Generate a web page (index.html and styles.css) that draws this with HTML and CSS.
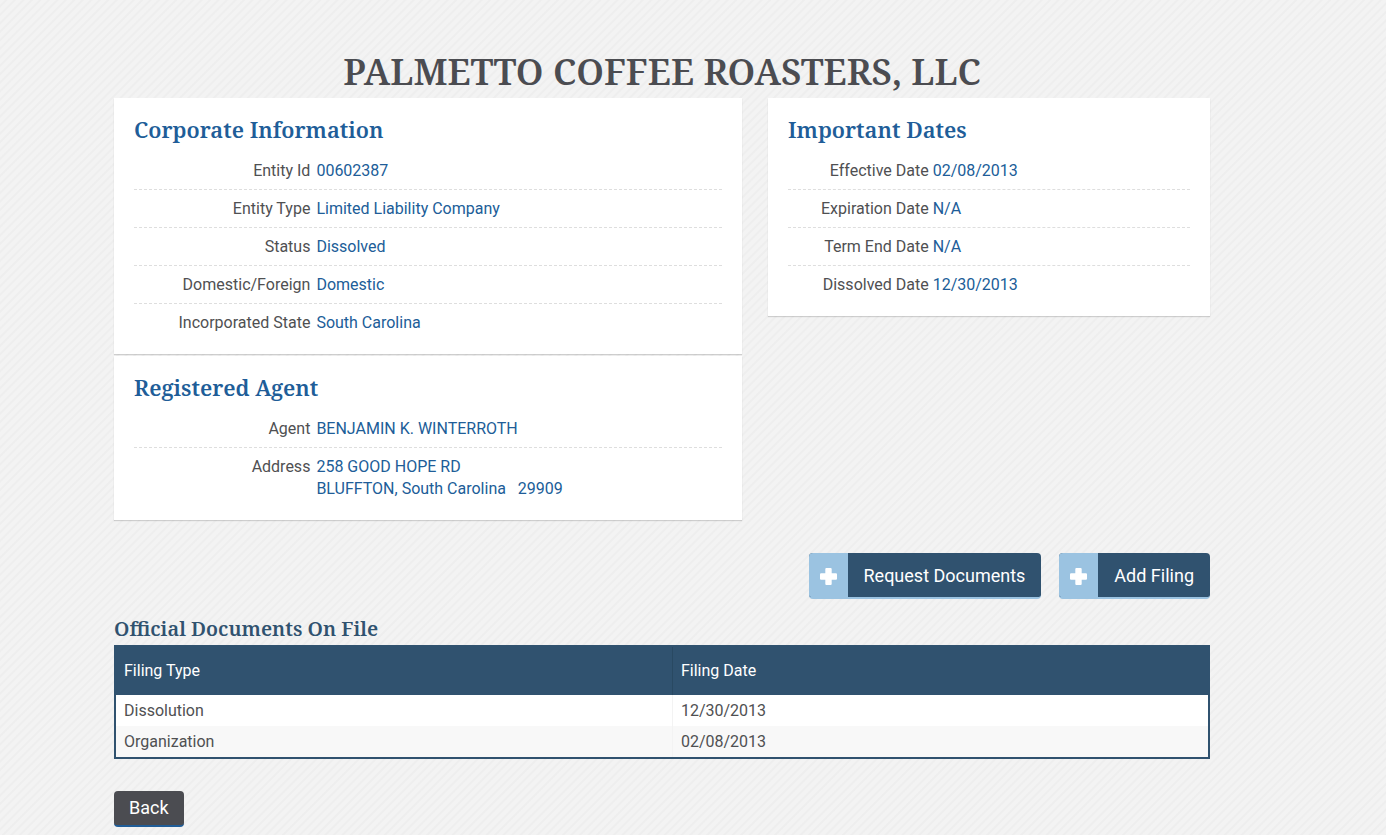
FILE: index.html
```html
<!DOCTYPE html>
<html lang="en">
<head>
    <meta charset="UTF-8">
    <meta name="viewport" content="width=device-width, initial-scale=1.0">
    <title>Palmetto Coffee Roasters, LLC</title>
    <link rel="stylesheet" href="styles.css">
</head>
<body>
    <main class="container">
        <h1>PALMETTO COFFEE ROASTERS, LLC</h1>

        <div class="columns">
            <div class="column">
                <section class="card">
                    <h2>Corporate Information</h2>
                    <dl class="details">
                        <div class="row"><dt>Entity Id</dt><dd>00602387</dd></div>
                        <div class="row"><dt>Entity Type</dt><dd>Limited Liability Company</dd></div>
                        <div class="row"><dt>Status</dt><dd>Dissolved</dd></div>
                        <div class="row"><dt>Domestic/Foreign</dt><dd>Domestic</dd></div>
                        <div class="row"><dt>Incorporated State</dt><dd>South Carolina</dd></div>
                    </dl>
                </section>
                <section class="card">
                    <h2>Registered Agent</h2>
                    <dl class="details">
                        <div class="row"><dt>Agent</dt><dd>BENJAMIN K. WINTERROTH</dd></div>
                        <div class="row"><dt>Address</dt><dd>258 GOOD HOPE RD<br>BLUFFTON, South Carolina &nbsp; 29909</dd></div>
                    </dl>
                </section>
            </div>
            <div class="column">
                <section class="card dates">
                    <h2>Important Dates</h2>
                    <dl class="details">
                        <div class="row"><dt>Effective Date</dt><dd>02/08/2013</dd></div>
                        <div class="row"><dt>Expiration Date</dt><dd>N/A</dd></div>
                        <div class="row"><dt>Term End Date</dt><dd>N/A</dd></div>
                        <div class="row"><dt>Dissolved Date</dt><dd>12/30/2013</dd></div>
                    </dl>
                </section>
            </div>
        </div>

        <div class="actions">
            <button type="button" class="btn-icon">
                <span class="icon"><svg viewBox="0 0 16 16" width="17" height="17" aria-hidden="true"><path d="M6 0h4q1 0 1 1v4h4q1 0 1 1v4q0 1-1 1h-4v4q0 1-1 1H6q-1 0-1-1v-4H1q-1 0-1-1V6q0-1 1-1h4V1q0-1 1-1z"/></svg></span>
                <span class="label">Request Documents</span>
            </button>
            <button type="button" class="btn-icon">
                <span class="icon"><svg viewBox="0 0 16 16" width="17" height="17" aria-hidden="true"><path d="M6 0h4q1 0 1 1v4h4q1 0 1 1v4q0 1-1 1h-4v4q0 1-1 1H6q-1 0-1-1v-4H1q-1 0-1-1V6q0-1 1-1h4V1q0-1 1-1z"/></svg></span>
                <span class="label">Add Filing</span>
            </button>
        </div>

        <h3 id="documentsTitle">Official Documents On File</h3>
        <table class="documents" aria-labelledby="documentsTitle">
            <thead>
                <tr><th scope="col">Filing Type</th><th scope="col">Filing Date</th></tr>
            </thead>
            <tbody>
                <tr><td>Dissolution</td><td>12/30/2013</td></tr>
                <tr><td>Organization</td><td>02/08/2013</td></tr>
            </tbody>
        </table>

        <button type="button" class="btn-back">Back</button>
    </main>
</body>
</html>
```
FILE: styles.css
```css
:root {
    --navy: #30526f;
    --blue: #205d98;
    --light-blue: #9bc3e1;
    --gray: #4b4c51;
    --serif: 'Droid Serif', 'Noto Serif', 'Liberation Serif', serif;
}

* {
    box-sizing: border-box;
}

body {
    margin: 0;
    font-family: Roboto, 'Liberation Sans', sans-serif;
    font-size: 16px;
    line-height: 22px;
    color: #4f5052;
    background: repeating-linear-gradient(135deg, #f3f3f3 0, #f3f3f3 3px, #eeeeee 4px, #eeeeee 5px, #f3f3f3 6px);
}

.container {
    padding: 46px 176px 9px 114px;
}

h1, h2, h3 {
    margin: 0;
    font-family: var(--serif);
    font-weight: 600;
}

h1 {
    font-size: 36px;
    line-height: 52px;
    text-align: center;
    color: var(--gray);
}

h2 {
    margin-bottom: 11px;
    font-size: 22px;
    line-height: 24px;
    color: var(--blue);
}

h3 {
    font-size: 20px;
    line-height: 32px;
    color: var(--navy);
}

.columns {
    display: grid;
    grid-template-columns: 628fr 442fr;
    align-items: start;
    gap: 26px;
}

.column {
    display: grid;
    gap: 2px;
}

.card {
    padding: 19px 20px 14px;
    background: #fff;
    box-shadow: 0 1px 1px rgba(0, 0, 0, 0.15);
}

.details {
    margin: 0;
}

.row {
    display: grid;
    grid-template-columns: 30% 1fr;
    column-gap: 6px;
    padding: 8px 0 7px;
    border-bottom: 1px dashed #dedede;
}

.row:last-child {
    padding-bottom: 6px;
    border-bottom: 0;
}

.dates .row {
    grid-template-columns: 35% 1fr;
    column-gap: 4px;
}

dt {
    text-align: right;
}

dd {
    margin: 0;
    color: var(--blue);
}

button {
    border: 0;
    font-family: inherit;
    font-size: 18px;
    color: #fff;
    cursor: pointer;
}

.actions {
    display: flex;
    justify-content: flex-end;
    gap: 18px;
    margin: 33px 0 14px;
}

.btn-icon {
    display: flex;
    padding: 0;
    height: 46px;
    border-bottom: 2px solid var(--light-blue);
    border-radius: 4px;
    background: var(--navy);
    overflow: hidden;
}

.icon {
    display: flex;
    align-items: center;
    justify-content: center;
    width: 39px;
    height: 46px;
    background: var(--light-blue);
}

.icon svg {
    fill: #fff;
}

.label {
    padding: 0 16px;
    line-height: 46px;
}

.documents {
    width: 100%;
    border: 2px solid var(--navy);
    border-spacing: 0;
    table-layout: fixed;
    background: #fff;
}

th, td {
    padding: 5px 8px 4px;
    text-align: left;
}

th {
    padding: 13px 8px;
    font-weight: 400;
    color: #fff;
    background: var(--navy);
}

th:first-child {
    width: 51%;
    border-right: 1px solid #294962;
}

td:first-child {
    border-right: 1px solid #f3f3f3;
}

tbody tr:nth-child(even) {
    background: #f8f8f8;
}

.btn-back {
    display: block;
    margin-top: 32px;
    padding: 0 15px;
    border-bottom: 2px solid var(--blue);
    border-radius: 4px;
    line-height: 34px;
    background: var(--gray);
}
```
